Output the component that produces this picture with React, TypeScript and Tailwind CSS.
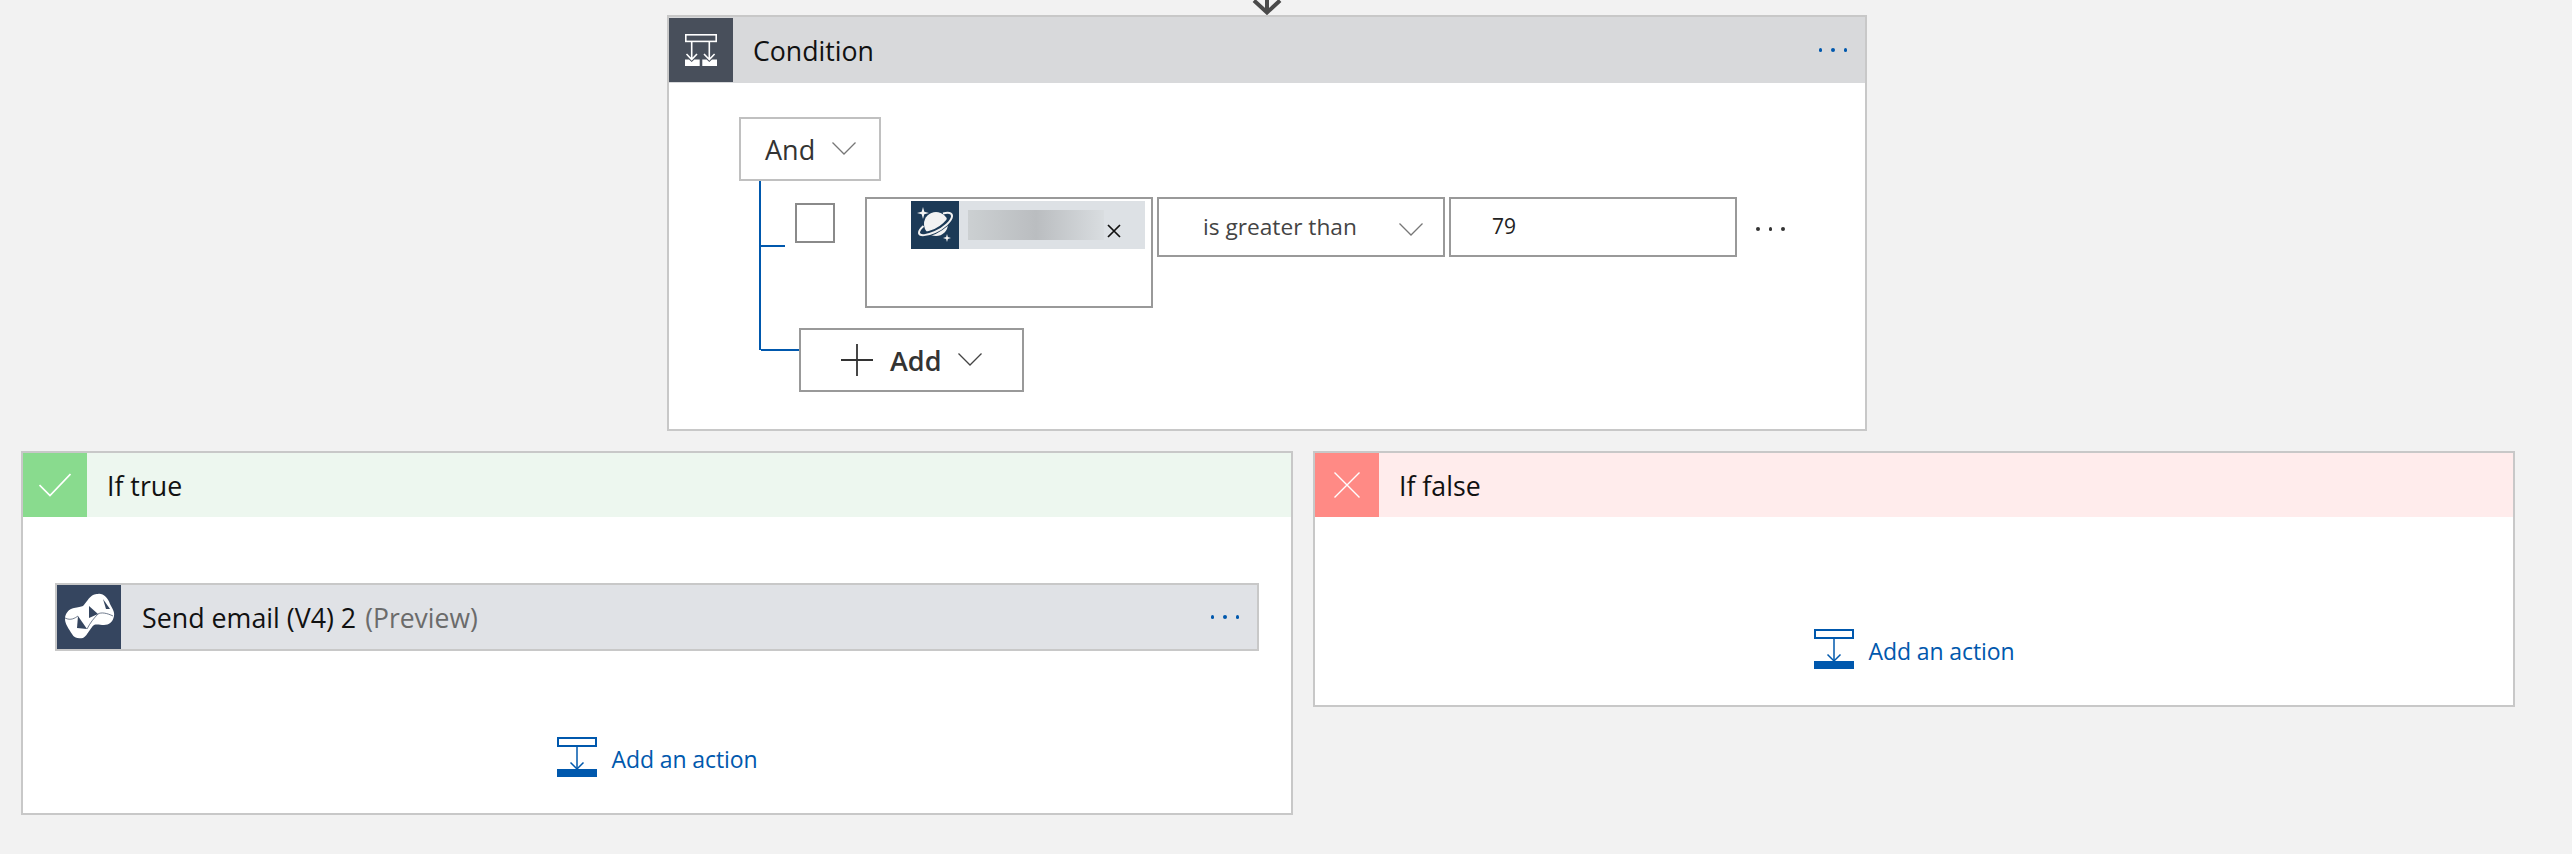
import React from "react";

const font = { fontFamily: '"Open Sans", "Noto Sans", sans-serif' };

function Chevron({ className }: { className: string }) {
  return (
    <svg viewBox="0 0 24 13" className={className} fill="none" stroke="currentColor" strokeWidth="1.3">
      <path d="M0.5 0.5 L12 12 L23.5 0.5" />
    </svg>
  );
}

function BlueDots() {
  return (
    <div className="flex gap-[9px]">
      <div className="w-[3.5px] h-[3.5px] rounded-full bg-[#0058ad]" />
      <div className="w-[3.5px] h-[3.5px] rounded-full bg-[#0058ad]" />
      <div className="w-[3.5px] h-[3.5px] rounded-full bg-[#0058ad]" />
    </div>
  );
}

function DarkDots() {
  return (
    <div className="flex gap-[9px]">
      <div className="w-[3.5px] h-[3.5px] rounded-full bg-[#333333]" />
      <div className="w-[3.5px] h-[3.5px] rounded-full bg-[#333333]" />
      <div className="w-[3.5px] h-[3.5px] rounded-full bg-[#333333]" />
    </div>
  );
}

function ConditionIcon() {
  return (
    <svg viewBox="0 0 64 64" className="w-[64px] h-[64px]" fill="none" stroke="#ffffff" strokeWidth="1.6">
      <rect x="16.8" y="16.8" width="30.4" height="6.6" />
      <path d="M22.7 24 V41 M17.5 36 L22.7 41.5 L28 36" />
      <path d="M40.3 24 V41 M35 36 L40.3 41.5 L45.6 36" />
      <path d="M16 41.5 H20 L22.7 44 L25.4 41.5 H30.7 V48 H16 Z" fill="#ffffff" stroke="none" />
      <path d="M33.3 41.5 H37.6 L40.3 44 L43 41.5 H48 V48 H33.3 Z" fill="#ffffff" stroke="none" />
    </svg>
  );
}

function PlanetIcon() {
  return (
    <svg viewBox="0 0 48 48" className="w-[48px] h-[48px] shrink-0 bg-[#1c3a57]">
      <circle cx="25" cy="23" r="12" fill="#f2f2f2" />
      <path d="M9 32 C13 35 23 32 30 27 C36 23 40 18 39 15" fill="none" stroke="#1c3a57" strokeWidth="5" />
      <path d="M32 12.5 C37 11 41.5 11.5 41 15.5 C40.5 20 33 27 24 31 C16 34.5 8.5 35.5 8 32 C8 29.5 10 27 12.5 25" fill="none" stroke="#f2f2f2" strokeWidth="2" />
      <path d="M12 6 L13.3 10.7 L18 12 L13.3 13.3 L12 18 L10.7 13.3 L6 12 L10.7 10.7 Z" fill="#f2f2f2" />
      <path d="M36 33 L36.9 36.1 L40 37 L36.9 37.9 L36 41 L35.1 37.9 L32 37 L35.1 36.1 Z" fill="#f2f2f2" />
    </svg>
  );
}

function MailIcon() {
  return (
    <svg viewBox="0 0 64 64" className="w-[64px] h-[64px] shrink-0">
      <path
        d="M41 9 C46 8 51 13 53 19 C55 23 58 27 57 31 C56 37 52 40 47 40 C43 40 40 39 37 40 C33 43 31 50 26 53 C21 54 17 53 15 49 C12 44 8 39 8 34 C8 28 12 24 17 23 C21 22 24 22 26 21 C29 18 32 12 36 10 C38 9 39 9 41 9 Z"
        fill="#ffffff"
      />
      <path d="M21 31 L30 44 L20 43 Z" fill="#35455f" />
      <path d="M32 21 L41 29 L32 33 Z" fill="#35455f" />
      <path d="M46 14 L53 24 L49 24 Z" fill="#35455f" />
      <path d="M8 33 C14 36 18 33 21 31" fill="none" stroke="#35455f" strokeWidth="0.7" />
      <path d="M30 44 C33 38 37 33 41 29 C44 27 50 28 56 31" fill="none" stroke="#35455f" strokeWidth="0.7" />
    </svg>
  );
}

function AddActionIcon() {
  return (
    <svg viewBox="0 0 40 40" className="w-[40px] h-[40px]" fill="none" stroke="#0058ad" strokeWidth="2">
      <rect x="1" y="1" width="38" height="8" />
      <path d="M20 9 V32" strokeWidth="1.5" />
      <path d="M13.5 25.5 L20 32 L26.5 25.5" strokeWidth="1.5" />
      <rect x="0" y="32" width="40" height="8" fill="#0058ad" stroke="none" />
    </svg>
  );
}

function AddAction() {
  return (
    <div className="flex items-center justify-center gap-[15px]">
      <AddActionIcon />
      <span className="text-[#0058ad] text-[23px] leading-[28px] mt-[4px] tracking-[-0.1px]">Add an action</span>
    </div>
  );
}

export default function App() {
  return (
    <div className="h-screen overflow-hidden bg-[#f2f2f2] text-black" style={font}>
      {/* arrow coming from the step above */}
      <div className="ml-[667px] w-[1200px] h-[15px] flex justify-center items-end">
        <svg viewBox="0 0 30 15" className="w-[30px] h-[15px]" fill="none" stroke="#4a4a4a" strokeWidth="4">
          <path d="M15 0 V12 M2 0.5 L15 12.5 L28 0.5" />
        </svg>
      </div>

      {/* Condition */}
      <div className="ml-[667px] w-[1200px] h-[416px] border-2 border-[#c8c8c8] bg-white">
        <div className="h-[66px] bg-[#d8d9db] flex items-center">
          <div className="w-[64px] h-[64px] bg-[#484f5b]">
            <ConditionIcon />
          </div>
          <span className="ml-[20px] mt-[3px] text-[26.7px] text-[#111111]">Condition</span>
          <div className="ml-auto mr-[18px]">
            <BlueDots />
          </div>
        </div>

        <div className="pl-[70px] pt-[34px]">
          <div className="w-[142px] h-[64px] border-2 border-[#c0c0c0] flex items-center pl-[24px] gap-[17px]">
            <span className="text-[27px] text-[#333333] mt-[2px]">And</span>
            <Chevron className="w-[24px] h-[13px] text-[#777777] -mt-[1px]" />
          </div>

          <div className="ml-[20px] h-[169px] border-l-2 border-[#0058ad] pt-[16px]">
            <div className="flex items-start">
              <div className="w-[24px] h-[2px] mt-[48px] bg-[#0058ad]" />
              <div className="ml-[10px] mt-[6px] w-[40px] h-[40px] border-2 border-[#8a8a8a]" />
              <div className="ml-[30px] w-[288px] h-[111px] border-2 border-[#999999] pt-[2px] pl-[44px]">
                <div className="w-[234px] h-[48px] bg-[#dde1e5] flex items-start">
                  <PlanetIcon />
                  <div className="ml-[9px] mt-[9px] w-[136px] h-[30px] bg-gradient-to-r from-[#ccd0d2] via-[#babdc0] to-[#d9dde0]" />
                  <svg viewBox="0 0 14 14" className="ml-[3px] mt-[23px] w-[14px] h-[14px]" fill="none" stroke="#111111" strokeWidth="1.7">
                    <path d="M1 1 L13 13 M13 1 L1 13" />
                  </svg>
                </div>
              </div>
              <div className="ml-[4px] w-[288px] h-[60px] border-2 border-[#999999] flex items-center pl-[44px]">
                <span className="text-[22.7px] text-[#444444] mt-[1px]">is greater than</span>
                <Chevron className="ml-auto mr-[20px] mt-[4px] w-[24px] h-[13px] text-[#777777]" />
              </div>
              <div className="ml-[4px] w-[288px] h-[60px] border-2 border-[#999999] flex items-center pl-[41px]">
                <span className="text-[21px] text-[#222222] -mt-[1px]">79</span>
              </div>
              <div className="ml-[19px] mt-[30px]">
                <DarkDots />
              </div>
            </div>

            <div className="flex items-start mt-[20px]">
              <div className="w-[38px] h-[2px] mt-[21px] bg-[#0058ad]" />
              <div className="w-[225px] h-[64px] border-2 border-[#999999] flex items-center pl-[40px]">
                <svg viewBox="0 0 32 32" className="w-[32px] h-[32px]" fill="none" stroke="#333333" strokeWidth="1.8">
                  <path d="M0 16 H32 M16 0 V32" />
                </svg>
                <span className="ml-[17px] mt-[3px] text-[27px] font-semibold text-[#333333]">Add</span>
                <Chevron className="ml-[17px] w-[24px] h-[13px] text-[#444444] -mt-[2px]" />
              </div>
            </div>
          </div>
        </div>
      </div>

      {/* branches */}
      <div className="mt-[20px] pl-[21px] flex items-start gap-[20px]">
        <div className="w-[1272px] h-[364px] border-2 border-[#c8c8c8] bg-white">
          <div className="h-[64px] bg-[#edf7ef] flex items-center">
            <div className="w-[64px] h-[64px] bg-[#89db8e] flex items-center justify-center">
              <svg viewBox="0 0 32 24" className="w-[32px] h-[24px]" fill="none" stroke="#ffffff" strokeWidth="1.7">
                <path d="M0.5 12 L11 22.5 L31.5 1" />
              </svg>
            </div>
            <span className="ml-[20px] mt-[3px] text-[26.7px] text-[#111111]">If true</span>
          </div>
          <div className="pt-[66px] pl-[32px]">
            <div className="w-[1204px] h-[68px] border-2 border-[#c8c8c8] bg-[#e0e2e6] flex items-center">
              <div className="bg-[#35455f]">
                <MailIcon />
              </div>
              <span className="ml-[21px] mt-[3px] text-[26.8px] text-[#111111]">Send email (V4) 2</span>
              <span className="ml-[9px] mt-[3px] text-[26.5px] text-[#6b6b6b]">(Preview)</span>
              <div className="ml-auto mr-[18px]">
                <BlueDots />
              </div>
            </div>
          </div>
          <div className="mt-[86px]">
            <AddAction />
          </div>
        </div>

        <div className="w-[1202px] h-[256px] border-2 border-[#c8c8c8] bg-white">
          <div className="h-[64px] bg-[#ffecec] flex items-center">
            <div className="w-[64px] h-[64px] bg-[#ff8a85] flex items-center justify-center">
              <svg viewBox="0 0 26 26" className="w-[26px] h-[26px]" fill="none" stroke="#ffffff" strokeWidth="1.4">
                <path d="M0.5 0.5 L25.5 25.5 M25.5 0.5 L0.5 25.5" />
              </svg>
            </div>
            <span className="ml-[20px] mt-[3px] text-[26.7px] text-[#111111]">If false</span>
          </div>
          <div className="mt-[112px]">
            <AddAction />
          </div>
        </div>
      </div>
    </div>
  );
}
